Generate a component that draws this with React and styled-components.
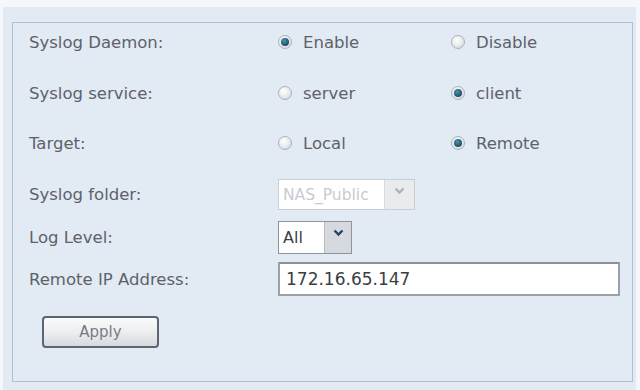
import React from "react";
import styled, { createGlobalStyle } from "styled-components";

const Global = createGlobalStyle`
  html, body { margin: 0; padding: 0; background: #f5f7fa; }
  body { width: 640px; height: 390px; overflow: hidden; }
  * { box-sizing: border-box; }
`;

const Page = styled.div`
  width: 640px;
  height: 390px;
  padding: 7px 4px 0 3px;
  font-family: "DejaVu Sans", "Liberation Sans", sans-serif;
`;

const Panel = styled.div`
  background: #e2eaf4;
  height: 383px;
  padding: 15px 3px 0 9px;
`;

const Box = styled.div`
  border: 1px solid #b3bfcc;
  height: 360px;
  padding: 4px 0 0 16px;
`;

const Row = styled.div`
  display: grid;
  grid-template-columns: 249px 173px 1fr;
  align-items: center;
  height: 30px;
  margin-top: ${(p) => p.$gap || 0}px;
`;

const Label = styled.div`
  font-size: 16.5px;
  color: #5d6269;
  white-space: nowrap;
`;

const Option = styled.label`
  display: flex;
  align-items: center;
  gap: 11px;
  font-size: 16.5px;
  color: #5d6269;
`;

const RadioDot = styled.span`
  width: 14px;
  height: 14px;
  flex: none;
  border-radius: 50%;
  border: 1px solid #aab2ba;
  background: radial-gradient(circle at 40% 35%, #ffffff 0%, #e6e9ec 55%, #c6cbd0 100%);
  display: inline-flex;
  align-items: center;
  justify-content: center;
  &::after {
    content: "";
    display: ${(p) => (p.$on ? "block" : "none")};
    width: 8px;
    height: 8px;
    border-radius: 50%;
    background: radial-gradient(circle at 40% 35%, #4f94ab 0%, #1f5469 65%, #163f53 100%);
  }
`;

const Select = styled.div`
  display: flex;
  height: ${(p) => p.$h}px;
  width: ${(p) => p.$w}px;
  border: 1px solid ${(p) => (p.$disabled ? "#c9ced4" : "#8d949b")};
  background: #fff;
`;

const SelectText = styled.div`
  flex: 1;
  display: flex;
  align-items: center;
  padding-left: 4px;
  font-size: ${(p) => (p.$disabled ? 15.5 : 16)}px;
  color: ${(p) => (p.$disabled ? "#c8ccd1" : "#3c4045")};
  overflow: hidden;
  white-space: nowrap;
`;

const SelectArrow = styled.div`
  width: ${(p) => (p.$disabled ? 30 : 27)}px;
  flex: none;
  background: ${(p) => (p.$disabled ? "#e9ebed" : "#d6d9dd")};
  border-left: 1px solid ${(p) => (p.$disabled ? "#d8dbde" : "#b8bdc2")};
  display: flex;
  align-items: flex-start;
  justify-content: center;
  padding-top: 7px;
`;

const TextInput = styled.div`
  width: 342px;
  height: 34px;
  border: 2px solid #9aa1a8;
  border-top-color: #8a9198;
  background: #fff;
  display: flex;
  align-items: center;
  padding-left: 6px;
  font-size: 17px;
  color: #3a3e43;
`;

const ButtonRow = styled.div`
  margin-top: 24px;
  padding-left: 13px;
`;

const Button = styled.div`
  width: 117px;
  height: 32px;
  border: 2px solid #5c6671;
  border-radius: 4px;
  background: linear-gradient(#fbfbfb 0%, #eceef0 50%, #d7dadd 100%);
  display: flex;
  align-items: center;
  justify-content: center;
  font-size: 15px;
  color: #777c83;
`;

const Chevron = ({ color }) => (
  <svg width="11" height="8" viewBox="0 0 11 8">
    <path d="M1.5 1.5 L5.5 5.5 L9.5 1.5" fill="none" stroke={color} strokeWidth="2.4" />
  </svg>
);

const Radio = ({ on, children }) => (
  <Option>
    <RadioDot $on={on} />
    {children}
  </Option>
);

export default function App() {
  return (
    <Page>
      <Global />
      <Panel>
        <Box>
          <Row>
            <Label>Syslog Daemon:</Label>
            <Radio on>Enable</Radio>
            <Radio>Disable</Radio>
          </Row>
          <Row $gap={21}>
            <Label>Syslog service:</Label>
            <Radio>server</Radio>
            <Radio on>client</Radio>
          </Row>
          <Row $gap={20}>
            <Label>Target:</Label>
            <Radio>Local</Radio>
            <Radio on>Remote</Radio>
          </Row>
          <Row $gap={21}>
            <Label>Syslog folder:</Label>
            <Select $w={137} $h={31} $disabled>
              <SelectText $disabled>NAS_Public</SelectText>
              <SelectArrow $disabled>
                <Chevron color="#a9b3c4" />
              </SelectArrow>
            </Select>
          </Row>
          <Row $gap={12}>
            <Label>Log Level:</Label>
            <Select $w={74} $h={33}>
              <SelectText>All</SelectText>
              <SelectArrow>
                <Chevron color="#2c3e6a" />
              </SelectArrow>
            </Select>
          </Row>
          <Row $gap={11}>
            <Label>Remote IP Address:</Label>
            <TextInput>172.16.65.147</TextInput>
          </Row>
          <ButtonRow>
            <Button>Apply</Button>
          </ButtonRow>
        </Box>
      </Panel>
    </Page>
  );
}
